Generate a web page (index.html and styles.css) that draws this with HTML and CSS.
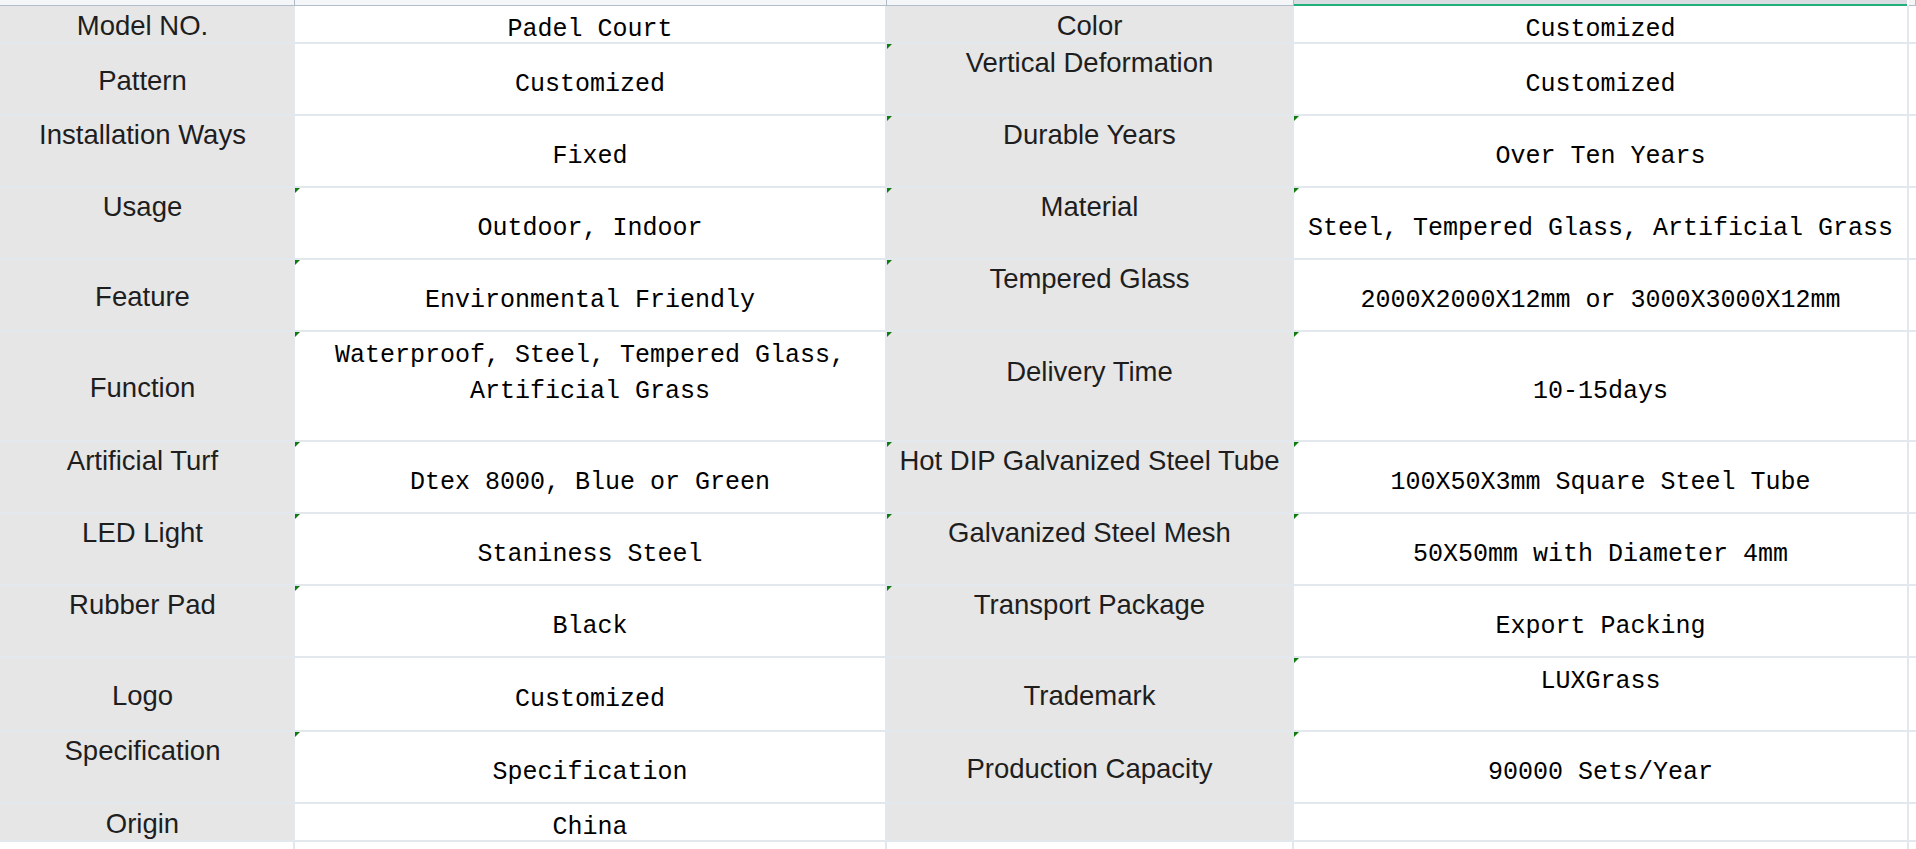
FILE: index.html
```html
<!DOCTYPE html>
<html>
<head>
    <title>Padel Court Specification</title>
    <link rel="stylesheet" href="styles.css">
</head>
<body>
    <div class="colhead">
        <div class="hcell"></div>
        <div class="hcell"></div>
        <div class="hcell"></div>
        <div class="hcell sel"></div>
        <div class="hcell"></div>
    </div>
    <div class="sheet">
        <!-- row 1 -->
        <div class="lab">Model NO.</div>
        <div class="val">Padel Court</div>
        <div class="lab">Color</div>
        <div class="val">Customized</div>
        <div class="blank"></div>
        <!-- row 2 -->
        <div class="lab">Pattern</div>
        <div class="val">Customized</div>
        <div class="lab top mark">Vertical Deformation</div>
        <div class="val">Customized</div>
        <div class="blank"></div>
        <!-- row 3 -->
        <div class="lab top">Installation Ways</div>
        <div class="val">Fixed</div>
        <div class="lab top mark">Durable Years</div>
        <div class="val mark">Over Ten Years</div>
        <div class="blank"></div>
        <!-- row 4 -->
        <div class="lab top">Usage</div>
        <div class="val mark">Outdoor, Indoor</div>
        <div class="lab top mark">Material</div>
        <div class="val mark">Steel, Tempered Glass, Artificial Grass</div>
        <div class="blank"></div>
        <!-- row 5 -->
        <div class="lab">Feature</div>
        <div class="val mark">Environmental Friendly</div>
        <div class="lab top mark">Tempered Glass</div>
        <div class="val">2000X2000X12mm or 3000X3000X12mm</div>
        <div class="blank"></div>
        <!-- row 6 -->
        <div class="lab">Function</div>
        <div class="val top mark">Waterproof, Steel, Tempered Glass, Artificial Grass</div>
        <div class="lab dt mark">Delivery Time</div>
        <div class="val mark">10-15days</div>
        <div class="blank"></div>
        <!-- row 7 -->
        <div class="lab top">Artificial Turf</div>
        <div class="val mark">Dtex 8000, Blue or Green</div>
        <div class="lab top mark">Hot DIP Galvanized Steel Tube</div>
        <div class="val mark">100X50X3mm Square Steel Tube</div>
        <div class="blank"></div>
        <!-- row 8 -->
        <div class="lab top">LED Light</div>
        <div class="val mark">Staniness Steel</div>
        <div class="lab top mark">Galvanized Steel Mesh</div>
        <div class="val mark">50X50mm with Diameter 4mm</div>
        <div class="blank"></div>
        <!-- row 9 -->
        <div class="lab top">Rubber Pad</div>
        <div class="val mark">Black</div>
        <div class="lab top mark">Transport Package</div>
        <div class="val">Export Packing</div>
        <div class="blank"></div>
        <!-- row 10 -->
        <div class="lab">Logo</div>
        <div class="val">Customized</div>
        <div class="lab">Trademark</div>
        <div class="val top mark">LUXGrass</div>
        <div class="blank"></div>
        <!-- row 11 -->
        <div class="lab top">Specification</div>
        <div class="val mark">Specification</div>
        <div class="lab">Production Capacity</div>
        <div class="val mark">90000 Sets/Year</div>
        <div class="blank"></div>
        <!-- row 12 -->
        <div class="lab">Origin</div>
        <div class="val">China</div>
        <div class="lab"></div>
        <div class="val"></div>
        <div class="blank"></div>
        <!-- empty row -->
        <div class="blank"></div>
        <div class="blank"></div>
        <div class="blank"></div>
        <div class="blank"></div>
        <div class="blank"></div>
    </div>
</body>
</html>
```

FILE: styles.css
```css
body {
    margin: 0;
    overflow: hidden;
    background-color: white;
    font-family: "Liberation Sans", Arial, sans-serif;
}

/* column header strip */
.colhead {
    display: grid;
    grid-template-columns: 303px 592px 407px 615px 7px;
    height: 6px;
    margin-left: -8px;
}
.hcell {
    background-color: #f5f6f8;
    border-bottom: 1px solid #b4bccb;
    border-right: 1px solid #b0b9ca;
}
.hcell.sel {
    background-color: #d9dce1;
    border-bottom: 2px solid #22b07a;
    border-right: none;
    margin-right: 2px;
}

/* cells */
.sheet {
    display: grid;
    grid-template-columns: 301px 590px 405px 613px 7px;
    grid-template-rows: 36px 70px 70px 70px 70px 108px 70px 70px 70px 72px 70px 36px 20px;
    gap: 2px;
    margin-left: -8px;
    background-color: #e3e7ee;
}
.lab {
    display: flex;
    justify-content: center;
    align-items: center;
    padding-top: 4px;
    background-color: #e6e6e6;
    color: #1e1e1e;
    font-size: 27.5px;
    line-height: 32px;
    white-space: nowrap;
}
.lab.top {
    align-items: flex-start;
    padding-top: 3px;
}
.lab.dt {
    align-items: flex-start;
    padding-top: 24px;
}
.val {
    display: flex;
    justify-content: center;
    align-items: center;
    padding: 12px 4px 0;
    background-color: white;
    color: #000;
    font-family: "Liberation Mono", monospace;
    font-size: 25px;
    line-height: 36px;
    text-align: center;
}
.val.top {
    align-items: flex-start;
    padding-top: 6px;
}
.blank {
    background-color: white;
}

/* green corner marks */
.mark {
    position: relative;
}
.mark::before {
    content: "";
    position: absolute;
    top: 0;
    left: 0;
    border-top: 5px solid #0f7b0f;
    border-right: 5px solid transparent;
}
```
